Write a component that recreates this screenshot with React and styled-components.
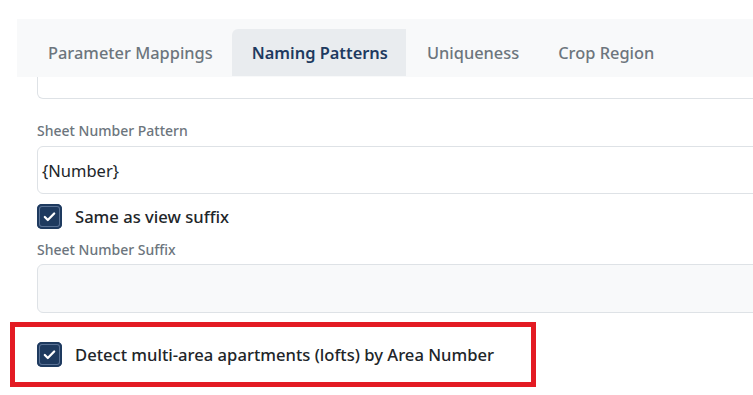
import React from 'react';
import styled, { createGlobalStyle } from 'styled-components';

const tabs = ['Parameter Mappings', 'Naming Patterns', 'Uniqueness', 'Crop Region'];

const GlobalStyle = createGlobalStyle`
  html, body {
    margin: 0;
    padding: 0;
    background: #fff;
    overflow: hidden;
  }
  body {
    font-family: "Noto Sans", "Open Sans", sans-serif;
    color: #212529;
  }
`;

const Page = styled.div`
  width: 1000px;
  padding: 19px 0 0 17px;
`;

const TabBar = styled.div`
  display: flex;
  gap: 1px;
  height: 58px;
  box-sizing: border-box;
  padding: 10px 0 1px 11px;
  background: #f8f9fa;
`;

const Tab = styled.div`
  display: flex;
  align-items: center;
  padding: 0 18px 0 20px;
  font-size: 16.4px;
  font-weight: ${(p) => (p.active ? 600 : 500)};
  color: ${(p) => (p.active ? '#1e3a5f' : '#6c757d')};
  background: ${(p) => (p.active ? '#e9ecef' : 'transparent')};
  border-radius: 6px 0 0 0;
`;

const Content = styled.div`
  padding: 0 0 0 20px;
`;

const CutField = styled.div`
  height: 22px;
  box-sizing: border-box;
  border: 1px solid #dee2e6;
  border-top: none;
  border-radius: 0 0 6px 6px;
`;

const Field = styled.div`
  margin-top: ${(p) => p.top}px;
`;

const Label = styled.div`
  font-size: 14px;
  line-height: 20px;
  font-weight: 500;
  color: #6c757d;
  margin-bottom: ${(p) => p.gap}px;
`;

const Input = styled.div`
  height: ${(p) => p.h || 48}px;
  box-sizing: border-box;
  display: flex;
  align-items: center;
  padding: 0 4px;
  font-size: 16.5px;
  color: #212529;
  border: 1px solid #dee2e6;
  border-radius: 6px;
  background: ${(p) => (p.disabled ? '#f8f9fa' : '#fff')};
`;

const CheckRow = styled.label`
  display: flex;
  align-items: center;
  gap: 13px;
  margin-top: ${(p) => p.top || 0}px;
  font-size: 16.6px;
  font-weight: 500;
  color: #212529;
`;

const Box = styled.span`
  width: 25px;
  height: 25px;
  flex: none;
  box-sizing: border-box;
  display: flex;
  align-items: center;
  justify-content: center;
  background: #1e3a5f;
  border-radius: 5px;
  box-shadow: inset 0 0 0 2px #1e3a5f, inset 0 0 0 3px #5b7396;
`;

const Highlight = styled.div`
  width: 526px;
  box-sizing: border-box;
  margin: 9px 0 0 -27px;
  padding: 15px 22px;
  border: 5px solid #e31b23;
`;

const Check = () => (
  <Box>
    <svg width="15" height="15" viewBox="0 0 16 16" fill="none">
      <path d="M3 8.5l3.2 3.2L13 4.8" stroke="#fff" strokeWidth="2.4" strokeLinecap="round" strokeLinejoin="round" />
    </svg>
  </Box>
);

export default function App() {
  return (
    <>
      <GlobalStyle />
      <Page>
        <TabBar>
          {tabs.map((t) => (
            <Tab key={t} active={t === 'Naming Patterns'}>{t}</Tab>
          ))}
        </TabBar>
        <Content>
          <CutField />
          <Field top={22}>
            <Label gap={5}>Sheet Number Pattern</Label>
            <Input>{'{Number}'}</Input>
          </Field>
          <CheckRow top={10}>
            <Check />
            Same as view suffix
          </CheckRow>
          <Field top={11}>
            <Label gap={4}>Sheet Number Suffix</Label>
            <Input disabled h={49} />
          </Field>
          <Highlight>
            <CheckRow>
              <Check />
              Detect multi-area apartments (lofts) by Area Number
            </CheckRow>
          </Highlight>
        </Content>
      </Page>
    </>
  );
}
